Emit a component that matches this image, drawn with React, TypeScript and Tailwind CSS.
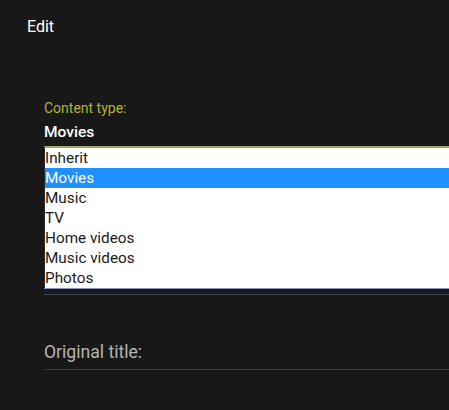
import React from 'react'

const OPTIONS = ['Inherit', 'Movies', 'Music', 'TV', 'Home videos', 'Music videos', 'Photos']

export default function App() {
  const selected = 'Movies'

  return (
    <div className="w-[449px] h-[410px] overflow-hidden bg-[#181818] font-['Roboto',sans-serif]">
      {/* header */}
      <div className="pl-[27px] pt-[17px] h-[44px]">
        <h1 className="text-[16px] leading-[20px] font-normal text-white">Edit</h1>
      </div>

      <div className="pl-[44px] pt-[55px]">
        <label className="block text-[14px] leading-[18px] text-[#b3b336]">Content type:</label>
        <div className="mt-[6px] text-[15.5px] leading-[18px] font-medium text-white">{selected}</div>

        {/* open select list */}
        <div className="mt-[5px] w-[430px]">
          <div className="border-t-2 border-l border-t-[#a3a96a] border-l-[#2a2a2a] bg-white">
            {OPTIONS.map(o => (
              <div
                key={o}
                className={`h-[20px] text-[15.3px] leading-[20px] ${
                  o === selected ? 'bg-[#1e90ff] text-white' : 'text-[#1a1a1a]'
                }`}
              >
                {o}
              </div>
            ))}
          </div>
          <div className="h-[1px] bg-[#8d96ab]" />
          <div className="h-[4px] bg-[#141a2b]" />
          <div className="h-[1px]" />
          <div className="h-[1px] bg-[#47423e]" />
        </div>

        {/* original title field */}
        <div className="mt-[47px] w-[420px] border-b border-[#3a3a3a] pb-[7px]">
          <span className="block text-[17.6px] leading-[20px] text-[#b4b4b4]">Original title:</span>
        </div>
      </div>
    </div>
  )
}
